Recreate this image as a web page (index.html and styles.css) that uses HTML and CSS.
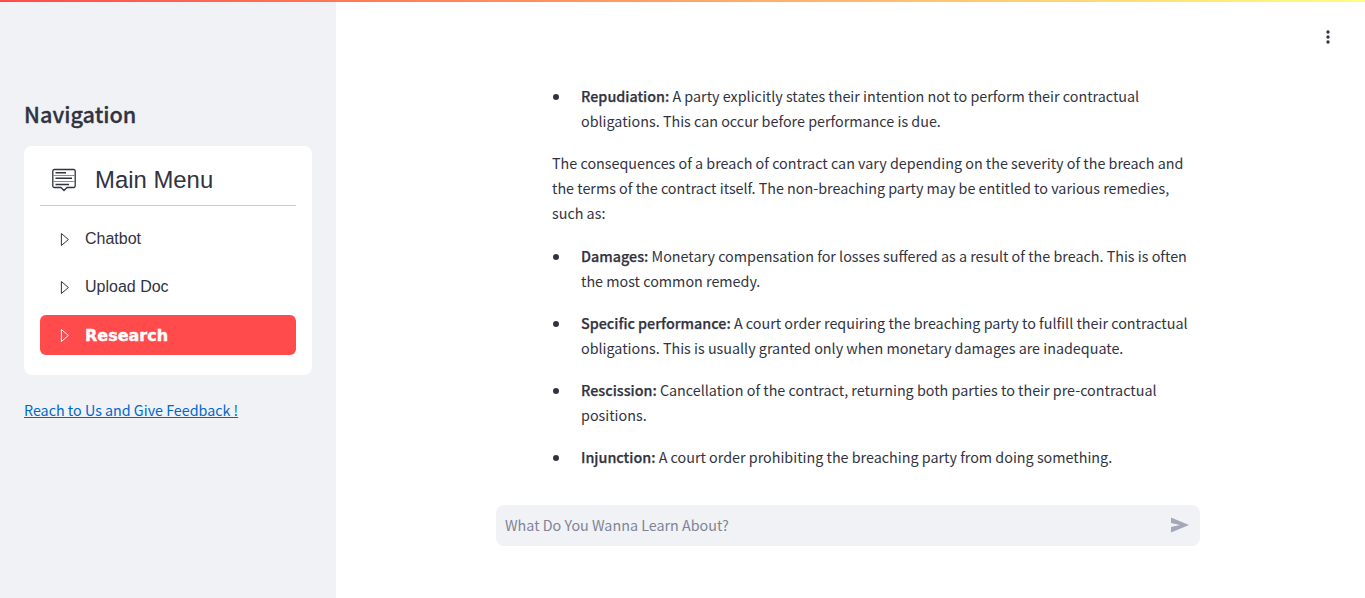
FILE: index.html
```html
<!DOCTYPE html>
<html lang="en">
<head>
<meta charset="utf-8">
<title>Research</title>
<link rel="stylesheet" href="styles.css">
</head>
<body>
<div class="deco"></div>
<div class="app">
  <aside class="sidebar">
    <h2 class="nav-title">Navigation</h2>
    <div class="menu-card">
      <div class="menu-head">
        <svg class="menu-icon" viewBox="0 0 26 26" fill="none" stroke="#31333f" stroke-width="1.300"><path d="M3.300 2.500h19.400a1.500 1.500 0 0 1 1.500 1.500v15a1.500 1.500 0 0 1-1.500 1.500H16l-3 3-3-3H3.300a1.500 1.500 0 0 1-1.500-1.500V4a1.500 1.500 0 0 1 1.500-1.500z"/><path stroke-width="1.500" d="M4.500 5.700h10.500M4.500 11.300h16.500M4.500 17.500h13.500"/><path stroke-width="1" stroke="#8a8b93" d="M2 8.500h22M2 14.500h22"/></svg>
        <span>Main Menu</span>
      </div>
      <ul class="menu-list">
        <li class="menu-item"><svg class="tri" viewBox="0 0 16 16" fill="none" stroke="currentColor" stroke-width="1"><path d="M4.400 2.500v12l7 -6z"/></svg>Chatbot</li>
        <li class="menu-item"><svg class="tri" viewBox="0 0 16 16" fill="none" stroke="currentColor" stroke-width="1"><path d="M4.400 2.500v12l7 -6z"/></svg>Upload Doc</li>
        <li class="menu-item active"><svg class="tri" viewBox="0 0 16 16" fill="none" stroke="currentColor" stroke-width="1"><path d="M4.400 2.500v12l7 -6z"/></svg><span class="active-label">Research</span></li>
      </ul>
    </div>
    <a class="feedback" href="#">Reach to Us and Give Feedback !</a>
  </aside>
  <main class="main">
    <button class="more" aria-label="Menu"><svg viewBox="0 0 24 24" width="20" height="20" fill="#31333f"><circle cx="12" cy="6" r="2"/><circle cx="12" cy="12" r="2"/><circle cx="12" cy="18" r="2"/></svg></button>
    <div class="content">
      <ul class="bullets first">
        <li><span><b>Repudiation:</b> A party explicitly states their intention not to perform their contractual obligations. This can occur before performance is due.</span></li>
      </ul>
      <p class="para">The consequences of a breach of contract can vary depending on the severity of the breach and the terms of the contract itself. The non-breaching party may be entitled to various remedies, such as:</p>
      <ul class="bullets">
        <li><span><b>Damages:</b> Monetary compensation for losses suffered as a result of the breach. This is often the most common remedy.</span></li>
        <li><span><b>Specific performance:</b> A court order requiring the breaching party to fulfill their contractual obligations. This is usually granted only when monetary damages are inadequate.</span></li>
        <li><span><b>Rescission:</b> Cancellation of the contract, returning both parties to their pre-contractual positions.</span></li>
        <li><span><b>Injunction:</b> A court order prohibiting the breaching party from doing something.</span></li>
      </ul>
    </div>
    <div class="chat-wrap">
      <div class="chat">
        <span class="placeholder">What Do You Wanna Learn About?</span>
        <svg class="send" viewBox="0 0 18 16" fill="#a3a8b8"><path d="M0 .5l18 7.500-18 7.500v-5.500l9-2-9-2z"/></svg>
      </div>
    </div>
  </main>
</div>
</body>
</html>
```
FILE: styles.css
```css
* { box-sizing: border-box; }
html, body { margin: 0; height: 100%; overflow: hidden; }
body { font-family: "Noto Sans CJK SC", "Noto Sans", sans-serif; color: #31333f; background: #fff; }
.deco { position: absolute; top: 0; left: 0; right: 0; height: 2px; z-index: 2; background: linear-gradient(90deg, #ff4b4b, #fffd80); }
.app { display: flex; height: 598px; }
.sidebar { width: 336px; flex: none; background: #f0f2f6; padding: 99px 24px 0; }
.nav-title { margin: 0 0 17px; font-size: 21.700px; line-height: 30px; font-weight: 500; -webkit-text-stroke: 0.3px #31333f; }
.menu-card { background: #fff; border-radius: 8px; padding: 16px; height: 229px; }
.menu-head { display: flex; align-items: center; height: 44px; padding-left: 11px; gap: 18px; font: 23.900px/32px "Liberation Sans", Arial, sans-serif; padding-bottom: 8px; border-bottom: 1px solid #ccc; }
.menu-icon { width: 26px; height: 26px; }
.menu-list { list-style: none; margin: 13px 0 0; padding: 0; }
.menu-item { display: flex; align-items: center; height: 40px; margin-bottom: 8px; padding-left: 17px; gap: 12px; font: 16px/24px "Liberation Sans", Arial, sans-serif; border-radius: 6px; }
.menu-item.active { background: #ff4b4b; color: #fff; }
.active-label { padding-top: 1px; font-family: "DejaVu Sans", sans-serif; font-weight: 700; -webkit-text-stroke: 0.4px #fff; }
.tri { width: 16px; height: 16px; }
.feedback { display: block; margin-top: 23px; font-size: 14.300px; line-height: 24px; color: #0068c9; }
.main { flex: 1; position: relative; min-width: 0; }
.more { position: absolute; top: 27px; right: 27px; width: 20px; height: 20px; padding: 0; border: 0; background: none; }
.content { width: 640px; margin-left: 216px; padding-top: 83px; font-size: 14.330px; line-height: 25px; }
.bullets { margin: 0; padding: 0; list-style: none; }
.bullets li { display: grid; grid-template-columns: 29px 1fr; margin-bottom: 17px; }
.bullets li::before { content: ""; width: 6px; height: 6px; margin: 11px 0 0 1px; border-radius: 50%; background: #31333f; }
.bullets b { font-weight: 500; -webkit-text-stroke: 0.25px #31333f; }
.para { margin: 0 0 18px; }
.chat-wrap { position: absolute; left: 160px; top: 505px; width: 704px; }
.chat { display: flex; align-items: center; justify-content: space-between; height: 41px; padding: 0 11px 2px 9px; background: #f0f2f6; border-radius: 8px; }
.placeholder { font-size: 14.330px; color: #808495; }
.send { width: 18px; height: 16px; }
```
